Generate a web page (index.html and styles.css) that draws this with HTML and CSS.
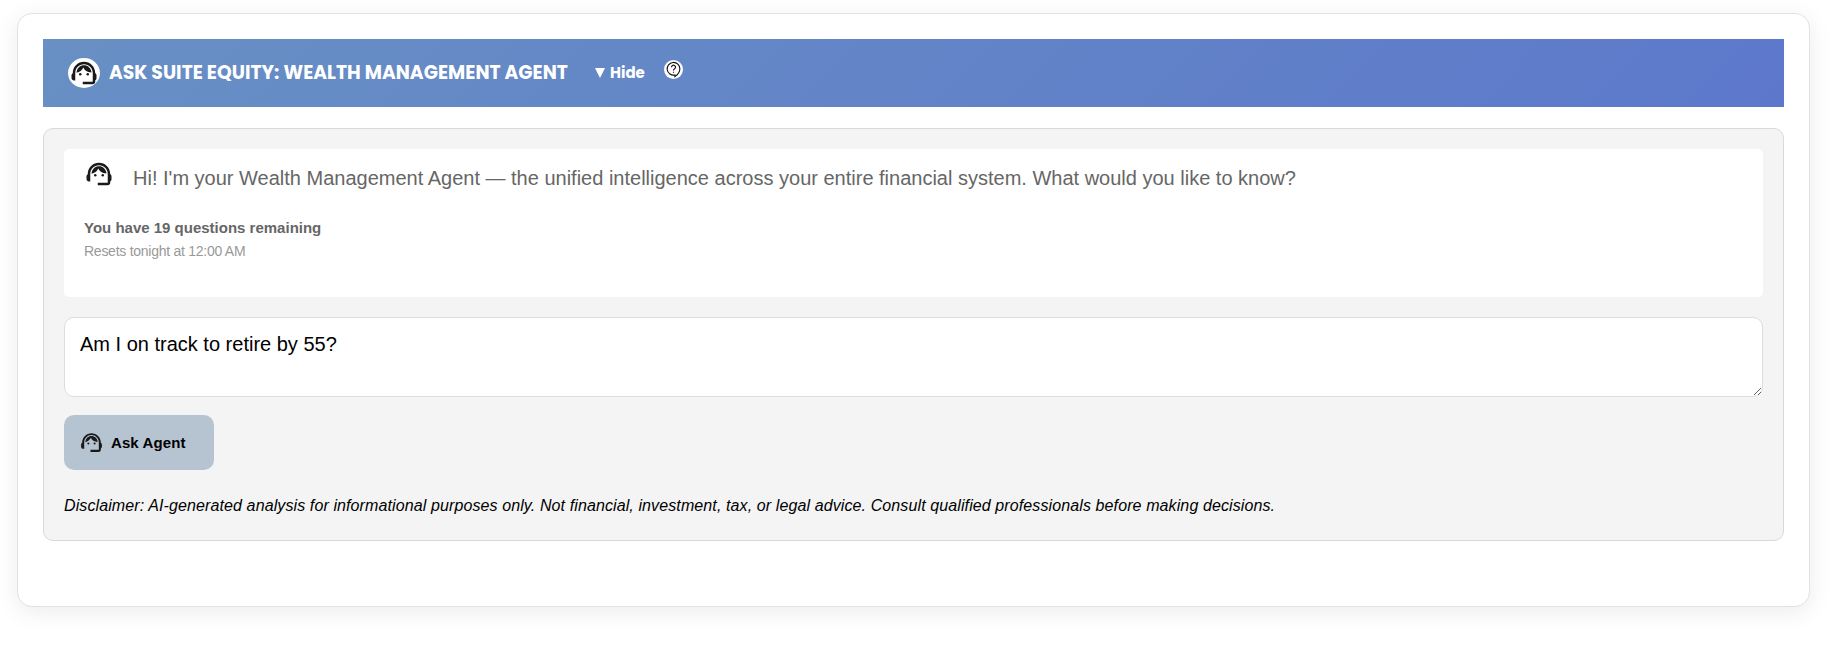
FILE: index.html
```html
<!DOCTYPE html>
<html lang="en">
<head>
    <meta charset="UTF-8">
    <meta name="viewport" content="width=device-width, initial-scale=1.0">
    <title>Wealth Management Agent</title>
    <link rel="stylesheet" href="styles.css">
</head>
<body>

    <!-- Shared agent icon -->
    <svg class="icon-defs" width="0" height="0">
        <symbol id="agent-icon" viewBox="0 0 24 24">
            <path d="M21 12.22C21 6.73 16.74 3 12 3c-4.69 0-9 3.65-9 9.28-.6.34-1 .98-1 1.72v2c0 1.1.9 2 2 2h1v-6.1c0-3.87 3.13-7 7-7s7 3.13 7 7V19h-8v2h8c1.1 0 2-.9 2-2v-1.22c.59-.31 1-.92 1-1.64v-2.3c0-.7-.41-1.31-1-1.62z"/>
            <circle cx="9" cy="13" r="1"/>
            <circle cx="15" cy="13" r="1"/>
            <path d="M12 5.700C9 5.700 6.400 7.800 6 11.800c2.600-.7 4.400-2 5.400-4.300 1.200 2.300 3 3.800 6.600 4C17.600 7.800 15 5.700 12 5.700z"/>
        </symbol>
    </svg>

    <div class="agent-card">
        <div class="agent-header">
            <span class="header-avatar"><svg><use href="#agent-icon"/></svg></span>
            <h3>ASK SUITE EQUITY: WEALTH MANAGEMENT AGENT</h3>
            <span class="toggle"><span class="arrow"></span>Hide</span>
            <span class="help">
                <svg viewBox="0 0 20 20">
                    <path d="M11.500 17.500v-1.700A6.700 6.700 0 1 1 16.700 9.300c0 3.400-2.400 6.300-5.200 8.200z"/>
                    <path d="M7.900 7.600a2.100 2.100 0 1 1 3.300 1.700c-.8.500-1.200.8-1.200 1.700M10 12.400v1.100"/>
                </svg>
            </span>
        </div>

        <div class="agent-panel">
            <div class="message-box">
                <div class="greeting">
                    <svg><use href="#agent-icon"/></svg>
                    <p>Hi! I'm your Wealth Management Agent — the unified intelligence across your entire financial system. What would you like to know?</p>
                </div>
                <p class="remaining">You have 19 questions remaining</p>
                <p class="resets">Resets tonight at 12:00 AM</p>
            </div>

            <textarea class="question" spellcheck="false">Am I on track to retire by 55?</textarea>

            <button type="button" class="ask-button">
                <svg><use href="#agent-icon"/></svg>
                <span>Ask Agent</span>
            </button>

            <p class="disclaimer">Disclaimer: AI-generated analysis for informational purposes only. Not financial, investment, tax, or legal advice. Consult qualified professionals before making decisions.</p>
        </div>
    </div>

</body>
</html>
```
FILE: styles.css
```css
/* Basic reset */
* {
    margin: 0;
    padding: 0;
    box-sizing: border-box;
}

body {
    font-family: "Liberation Sans", Arial, sans-serif;
    background-color: #fff;
    padding: 13px 27px 39px 17px;
}

.icon-defs {
    display: block;
}

/* Card */
.agent-card {
    height: 594px;
    padding: 25px;
    background-color: #fff;
    border: 1px solid #e2e2e2;
    border-radius: 15px;
    box-shadow: 0 5px 25px rgba(0, 0, 0, 0.08);
}

/* Header bar */
.agent-header {
    display: flex;
    align-items: center;
    height: 68px;
    padding-left: 25px;
    margin-bottom: 21px;
    background: linear-gradient(135deg, #6890c4, #5d78cb);
    color: #fff;
    font-family: Poppins, Inter, sans-serif;
}

.header-avatar {
    display: flex;
    align-items: center;
    justify-content: center;
    width: 32px;
    height: 30px;
    margin-right: 9px;
    background-color: #fff;
    border-radius: 50%;
}

.header-avatar svg {
    width: 30px;
    height: 30px;
    fill: #1a1a1a;
}

.agent-header h3 {
    width: 460px;
    font-size: 18.72px;
    font-weight: 700;
    line-height: 26px;
    white-space: nowrap;
    padding-bottom: 1px;
    letter-spacing: 0.02px;
}

.toggle {
    display: flex;
    align-items: center;
    gap: 5px;
    margin-left: 26px;
    padding-bottom: 1px;
    font-size: 15px;
    font-weight: 700;
}

.arrow {
    border-left: 5px solid transparent;
    border-right: 5px solid transparent;
    border-top: 10px solid #fff;
}

.help {
    width: 19px;
    height: 19px;
    margin: 0 0 7px 19px;
    background-color: #fff;
    border-radius: 50%;
}

.help svg {
    display: block;
    width: 19px;
    height: 19px;
    fill: none;
    stroke: #111;
    stroke-width: 1.2;
}

/* Grey panel */
.agent-panel {
    height: 413px;
    padding: 20px;
    background-color: #f4f4f4;
    border: 1px solid #d9d9d9;
    border-radius: 10px;
}

.message-box {
    height: 148px;
    padding: 10px 20px;
    margin-bottom: 20px;
    background-color: #fff;
    border-radius: 5px;
    color: #666;
}

.greeting {
    display: flex;
    gap: 19px;
    height: 59px;
}

.greeting svg {
    width: 30px;
    height: 30px;
    fill: #1a1a1a;
}

.greeting p {
    font-size: 20px;
    line-height: 38px;
    white-space: nowrap;
}

.remaining {
    font-size: 15px;
    font-weight: bold;
    line-height: 20px;
}

.resets {
    margin-top: 3px;
    color: #999;
    font-size: 14px;
    line-height: 20px;
    letter-spacing: -0.26px;
}

/* Question input */
.question {
    display: block;
    width: 100%;
    height: 80px;
    padding: 15px;
    background-color: #fff;
    border: 1px solid #ddd;
    border-radius: 10px;
    color: #000;
    font-family: inherit;
    font-size: 20px;
    resize: vertical;
}

.ask-button {
    display: flex;
    align-items: center;
    gap: 7px;
    width: 150px;
    height: 55px;
    padding-left: 15px;
    margin-top: 18px;
    background-color: #b6c4d2;
    border: none;
    border-radius: 10px;
    color: #000;
    font-family: inherit;
    font-size: 15px;
    font-weight: bold;
    letter-spacing: 0.1px;
    cursor: pointer;
}

.ask-button svg {
    width: 25px;
    height: 25px;
    fill: #1a1a1a;
}

.disclaimer {
    margin-top: 26px;
    font-size: 16px;
    font-style: italic;
    line-height: 20px;
    letter-spacing: 0.108px;
}
```
